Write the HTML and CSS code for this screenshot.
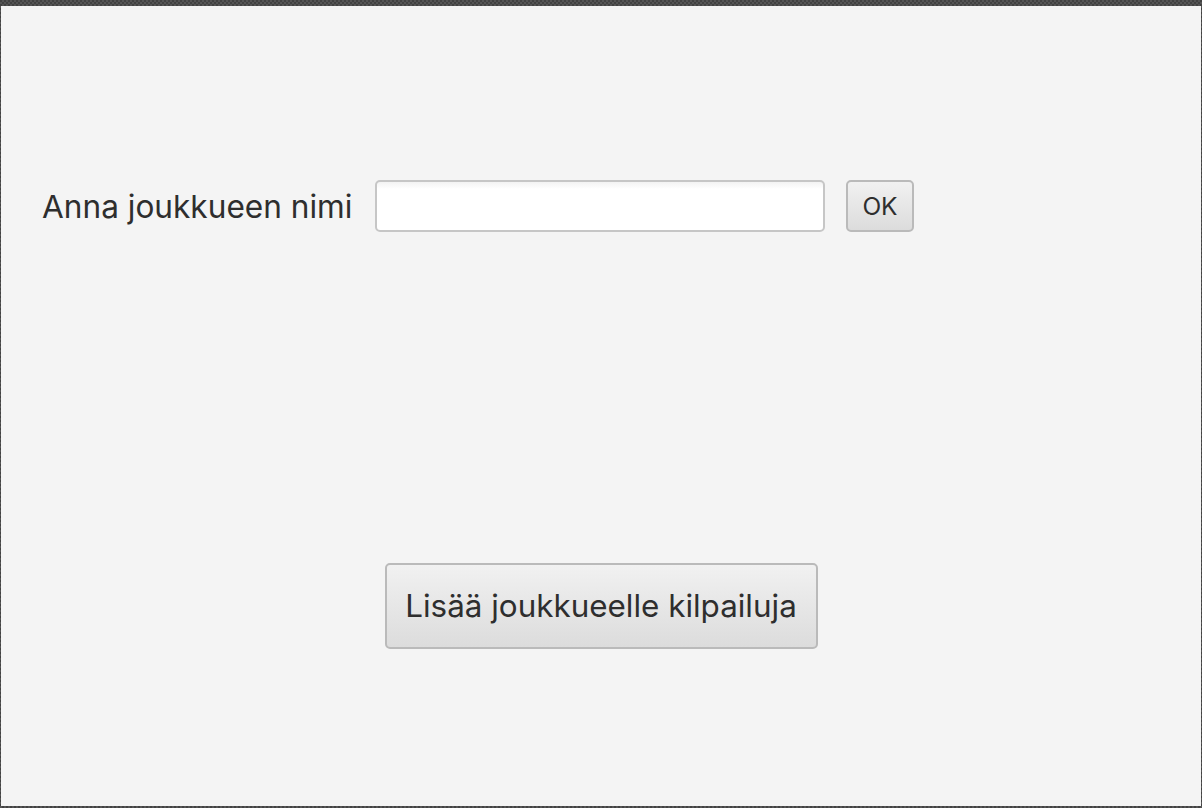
FILE: index.html
```html
<!DOCTYPE html>
<html lang="fi">
<head>
<meta charset="utf-8">
<title>Joukkue</title>
<link rel="stylesheet" href="styles.css">
</head>
<body>
<div class="frame">
  <div class="pane">
    <div class="name-row">
      <label class="name-label" for="team">Anna joukkueen nimi</label>
      <input class="name-input" id="team" type="text">
      <button class="btn btn-ok">OK</button>
    </div>
    <button class="btn btn-big">Lisää joukkueelle kilpailuja</button>
  </div>
</div>
</body>
</html>
```
FILE: styles.css
```css
html, body {
  margin: 0;
  padding: 0;
  background: #4a4a4a;
}
.frame {
  width: 1202px;
  height: 808px;
  box-sizing: border-box;
  padding: 6px 1px 2px 1px;
  background: repeating-conic-gradient(#555555 0 25%, #424242 0 50%) 0 0 / 4px 4px;
}
.pane {
  height: 100%;
  background: #f4f4f4;
  display: flex;
  flex-direction: column;
  box-sizing: border-box;
  padding: 174px 0 0 41px;
  font-family: "Inter", "Open Sans", sans-serif;
  color: #2e2e2e;
}
.name-row {
  display: flex;
  align-items: center;
  height: 52px;
}
.name-label {
  width: 333px;
  font-size: 31.6px;
  white-space: nowrap;
}
.name-input {
  width: 450px;
  height: 52px;
  box-sizing: border-box;
  border: 2px solid #c6c6c6;
  border-radius: 5px;
  background: linear-gradient(#f3f3f3 0, #ffffff 7px);
  margin: 0 21px 0 0;
  padding: 0 10px;
  font: inherit;
  outline: none;
}
.btn {
  font-family: "Inter", "Open Sans", sans-serif;
  color: #2e2e2e;
  border: 2px solid #bababa;
  border-radius: 5px;
  background: linear-gradient(#f1f1f1, #dcdcdc);
  box-sizing: border-box;
  padding: 0;
  cursor: default;
}
.btn-ok {
  width: 68px;
  height: 52px;
  font-size: 24.5px;
}
.btn-big {
  align-self: center;
  margin: 331px 0 0 -41px;
  width: 433px;
  height: 86px;
  font-size: 31.4px;
}
```
